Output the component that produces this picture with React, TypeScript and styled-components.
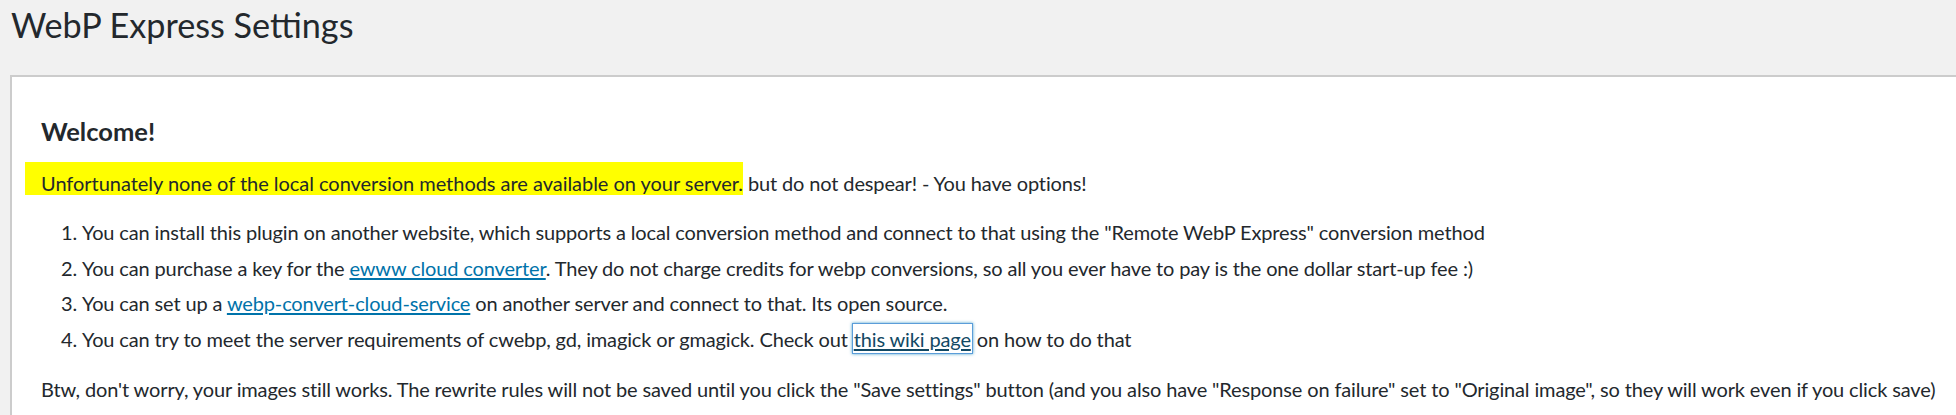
import React from 'react';
import styled, { createGlobalStyle, css } from 'styled-components';

const GlobalStyle = createGlobalStyle`
  html, body {
    margin: 0;
    padding: 0;
    background: #f1f1f1;
    overflow: hidden;
  }
  body {
    font-family: 'Lato', 'Open Sans', sans-serif;
    color: #23282d;
  }
`;

const Page = styled.div`
  height: 415px;
  padding: 5px 0 0 10px;
  box-sizing: border-box;
  overflow: hidden;
`;

const Title = styled.h1`
  margin: 0 0 30px 1px;
  font-size: 34.2px;
  line-height: 40px;
  font-weight: 400;
  color: #23282d;
`;

const Panel = styled.div`
  background: #fff;
  border: 2px solid #ccc;
  border-right: none;
  margin-right: -40px;
  padding: 38px 0 40px 29px;
  font-size: 20px;
  line-height: 30px;
  letter-spacing: -0.14px;
`;

const Heading = styled.h2`
  margin: 0 0 15px;
  font-size: 25.5px;
  line-height: 32px;
  font-weight: 700;
  letter-spacing: 0;
`;

const Para = styled.p<{ $gap?: number }>`
  margin: 0 0 ${(p) => p.$gap ?? 0}px;
  white-space: nowrap;
`;

const Highlight = styled.span`
  display: inline-block;
  background: #ffff00;
  line-height: 24px;
  letter-spacing: -0.03px;
  padding: 9px 0 0 16px;
  margin-left: -16px;
`;

const Steps = styled.ol`
  margin: 0 0 20px;
  padding-left: 41px;

  li {
    white-space: nowrap;
  }
  li + li {
    margin-top: 5.67px;
  }
`;

const Link = styled.a<{ $focused?: boolean }>`
  color: #0073aa;
  text-decoration: underline;
  text-underline-offset: 2px;
  ${(p) =>
    p.$focused &&
    css`
      color: #124964;
      padding: 3px 1px 2px;
      box-shadow: 0 0 0 1px #5b9dd9, 0 0 3px 1px rgba(30, 140, 190, 0.8);
    `}
`;

const App: React.FC = () => {
  return (
    <>
      <GlobalStyle />
      <Page>
        <Title>WebP Express Settings</Title>
        <Panel>
          <Heading>Welcome!</Heading>
          <Para $gap={19}>
            <Highlight>
              Unfortunately none of the local conversion methods are available on your server.
            </Highlight>{' '}
            but do not despear! - You have options!
          </Para>
          <Steps>
            <li>
              You can install this plugin on another website, which supports a local conversion
              method and connect to that using the "Remote WebP Express" conversion method
            </li>
            <li>
              You can purchase a key for the <Link href="#">ewww cloud converter</Link>. They do
              not charge credits for webp conversions, so all you ever have to pay is the one
              dollar start-up fee :)
            </li>
            <li>
              You can set up a <Link href="#">webp-convert-cloud-service</Link> on another server
              and connect to that. Its open source.
            </li>
            <li>
              You can try to meet the server requirements of cwebp, gd, imagick or gmagick. Check
              out <Link href="#" $focused>this wiki page</Link> on how to do that
            </li>
          </Steps>
          <Para>
            Btw, don't worry, your images still works. The rewrite rules will not be saved until
            you click the "Save settings" button (and you also have "Response on failure" set to
            "Original image", so they will work even if you click save)
          </Para>
        </Panel>
      </Page>
    </>
  );
};

export default App;
